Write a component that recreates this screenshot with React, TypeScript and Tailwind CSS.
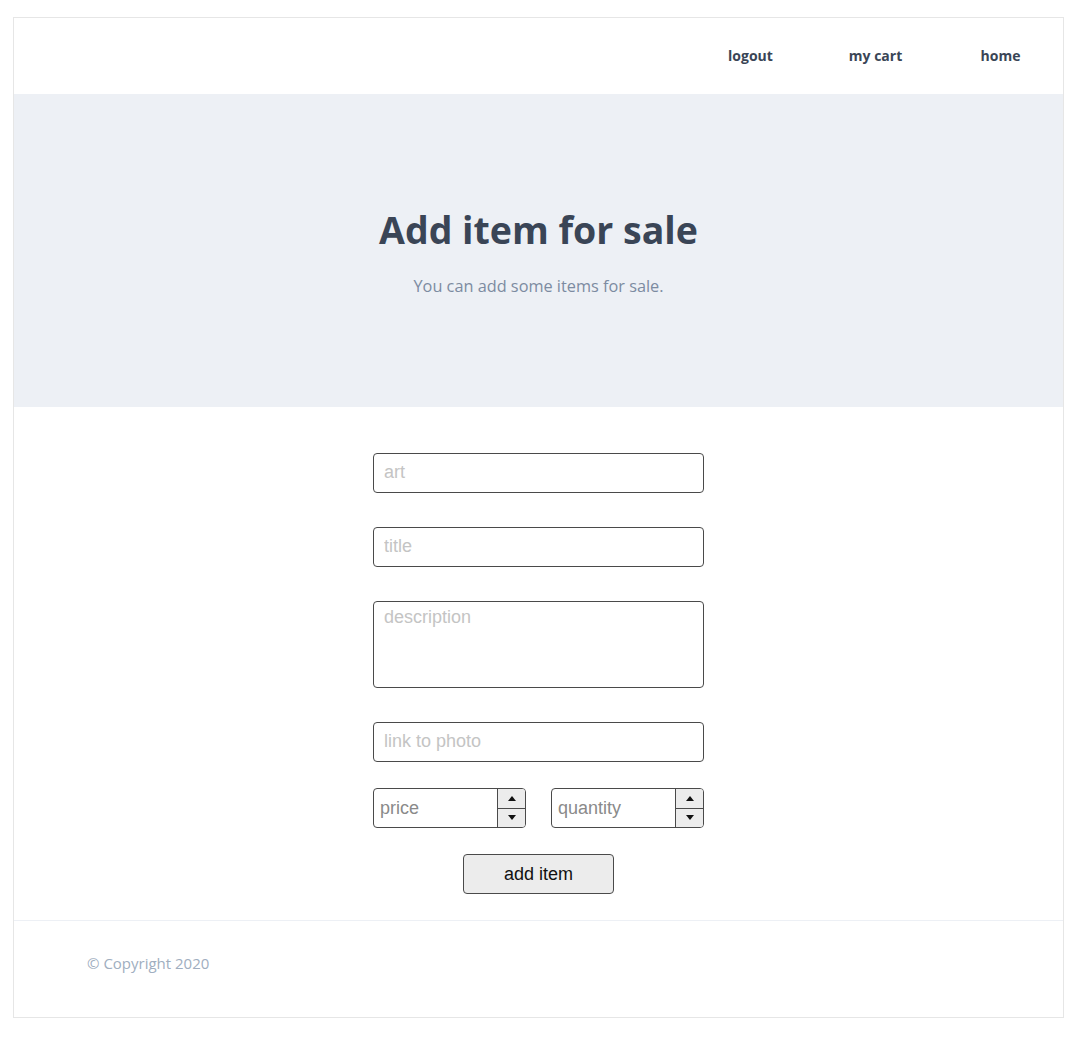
import React from "react";

const NumberField: React.FC<{ placeholder: string }> = ({ placeholder }) => (
  <div className="flex h-[40px] w-[153px] overflow-hidden rounded-[4px] border border-[#4a4a4a] bg-white">
    <input
      type="text"
      placeholder={placeholder}
      className="min-w-0 flex-1 bg-transparent pl-[6px] text-[18px] text-black outline-none placeholder:text-[#8a8a8a]"
      style={{ fontFamily: '"Liberation Sans", Arial, sans-serif' }}
    />
    <div className="flex w-[28px] flex-col border-l border-[#4a4a4a] bg-[#ececec]">
      <div className="flex flex-1 items-center justify-center border-b border-[#4a4a4a]">
        <svg width="8" height="5" viewBox="0 0 8 5">
          <path d="M0 5 L4 0 L8 5 Z" fill="#111" />
        </svg>
      </div>
      <div className="flex flex-1 items-center justify-center">
        <svg width="8" height="5" viewBox="0 0 8 5">
          <path d="M0 0 L4 5 L8 0 Z" fill="#111" />
        </svg>
      </div>
    </div>
  </div>
);

const App: React.FC = () => {
  const inputClass =
    "h-[40px] w-[331px] rounded-[4px] border border-[#4a4a4a] bg-white px-[10px] pb-[2px] text-[18px] text-black outline-none placeholder:text-[#c4c4c4]";
  const arial = { fontFamily: '"Liberation Sans", Arial, sans-serif' };

  return (
    <div className="min-h-[1041px] bg-white pl-[13px] pt-[17px]" style={{ fontFamily: '"Open Sans", sans-serif' }}>
      <div className="w-[1051px] border border-[#e6e6e6]">
        <header className="flex h-[76px] justify-end pb-[2px]">
          {["logout", "my cart", "home"].map((item) => (
            <a
              key={item}
              href="#"
              className="flex w-[125px] items-center justify-center text-[14px] font-bold text-[#3a4556]"
            >
              {item}
            </a>
          ))}
        </header>

        <section className="flex h-[313px] flex-col items-center bg-[#edf0f5] pt-[111px]">
          <h1 className="text-[37.5px] font-bold leading-[50px] text-[#3a4556]">Add item for sale</h1>
          <p className="mt-[19px] text-[16.3px] leading-[24px] text-[#7c8ba1]">You can add some items for sale.</p>
        </section>

        <form className="flex flex-col items-center pb-[26px] pt-[46px]" onSubmit={(e) => e.preventDefault()}>
          <input type="text" placeholder="art" className={inputClass} style={arial} />
          <input type="text" placeholder="title" className={`${inputClass} mt-[34px]`} style={arial} />
          <textarea
            placeholder="description"
            className="mt-[34px] h-[87px] w-[331px] resize-none rounded-[4px] border border-[#4a4a4a] bg-white px-[10px] pt-[2px] text-[18px] text-black outline-none placeholder:text-[#c4c4c4]"
            style={arial}
          />
          <input type="text" placeholder="link to photo" className={`${inputClass} mt-[34px]`} style={arial} />
          <div className="mt-[26px] flex w-[331px] justify-between">
            <NumberField placeholder="price" />
            <NumberField placeholder="quantity" />
          </div>
          <button
            type="submit"
            className="mt-[26px] h-[40px] w-[151px] rounded-[4px] border border-[#4a4a4a] bg-[#ececec] text-[18px] text-[#111]"
            style={arial}
          >
            add item
          </button>
        </form>

        <footer className="h-[97px] border-t border-[#edf0f5] pl-[73px] pt-[30px]">
          <span className="text-[15px] leading-[22px] text-[#a0aec0]">© Copyright 2020</span>
        </footer>
      </div>
    </div>
  );
};

export default App;
